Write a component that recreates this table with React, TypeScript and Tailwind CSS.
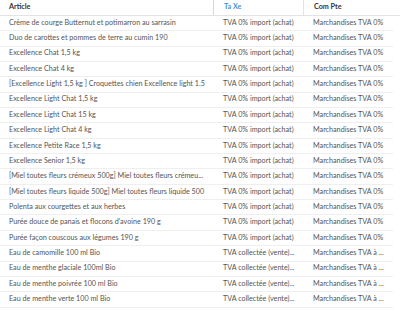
const rows: [string, string, string][] = [
  ['Crème de courge Butternut et potimarron au sarrasin', 'TVA 0% import (achat)', 'Marchandises TVA 0%'],
  ['Duo de carottes et pommes de terre au cumin 190', 'TVA 0% import (achat)', 'Marchandises TVA 0%'],
  ['Excellence Chat 1,5 kg', 'TVA 0% import (achat)', 'Marchandises TVA 0%'],
  ['Excellence Chat 4 kg', 'TVA 0% import (achat)', 'Marchandises TVA 0%'],
  ['[Excellence Light 1,5 kg ] Croquettes chien Excellence light 1.5', 'TVA 0% import (achat)', 'Marchandises TVA 0%'],
  ['Excellence Light Chat 1,5 kg', 'TVA 0% import (achat)', 'Marchandises TVA 0%'],
  ['Excellence Light Chat 15 kg', 'TVA 0% import (achat)', 'Marchandises TVA 0%'],
  ['Excellence Light Chat 4 kg', 'TVA 0% import (achat)', 'Marchandises TVA 0%'],
  ['Excellence Petite Race 1,5 kg', 'TVA 0% import (achat)', 'Marchandises TVA 0%'],
  ['Excellence Senior 1,5 kg', 'TVA 0% import (achat)', 'Marchandises TVA 0%'],
  ['[Miel toutes fleurs crémeux 500g] Miel toutes fleurs crémeu...', 'TVA 0% import (achat)', 'Marchandises TVA 0%'],
  ['[Miel toutes fleurs liquide 500g] Miel toutes fleurs liquide 500', 'TVA 0% import (achat)', 'Marchandises TVA 0%'],
  ['Polenta aux courgettes et aux herbes', 'TVA 0% import (achat)', 'Marchandises TVA 0%'],
  ["Purée douce de panais et flocons d'avoine 190 g", 'TVA 0% import (achat)', 'Marchandises TVA 0%'],
  ['Purée façon couscous aux légumes 190 g', 'TVA 0% import (achat)', 'Marchandises TVA 0%'],
  ['Eau de camomille 100 ml Bio', 'TVA collectée (vente)...', 'Marchandises TVA à ...'],
  ['Eau de menthe glaciale 100ml Bio', 'TVA collectée (vente)...', 'Marchandises TVA à ...'],
  ['Eau de menthe poivrée 100 ml Bio', 'TVA collectée (vente)...', 'Marchandises TVA à ...'],
  ['Eau de menthe verte 100 ml Bio', 'TVA collectée (vente)...', 'Marchandises TVA à ...'],
]

export default function App() {
  return (
    <div className="w-[400px] h-[310px] overflow-hidden bg-white text-[7.2px] font-['Lato',sans-serif] text-[#555]">
      {/* header */}
      <div className="flex h-[16px] items-center border-b border-[#e3e3e3] font-bold text-[#333]">
        <div className="w-[213px] pl-[9px]">Article</div>
        <div className="w-[90px] h-full flex items-center pl-[10px] border-l border-[#c5dcf2] text-[#4a90d9]">Ta Xe</div>
        <div className="flex-1 h-full flex items-center pl-[10px] border-l border-[#e3e3e3]">Com Pte</div>
      </div>

      <div className="w-[393px]">
        {rows.map(([a, b, c], i) => (
          <div key={i} className="flex h-[15.35px] items-center border-b border-[#efefef] whitespace-nowrap">
            <div className="w-[213px] pl-[9px]">{a}</div>
            <div className="w-[90px] pl-[10px]">{b}</div>
            <div className="flex-1 pl-[10px]">{c}</div>
          </div>
        ))}
      </div>
    </div>
  )
}
